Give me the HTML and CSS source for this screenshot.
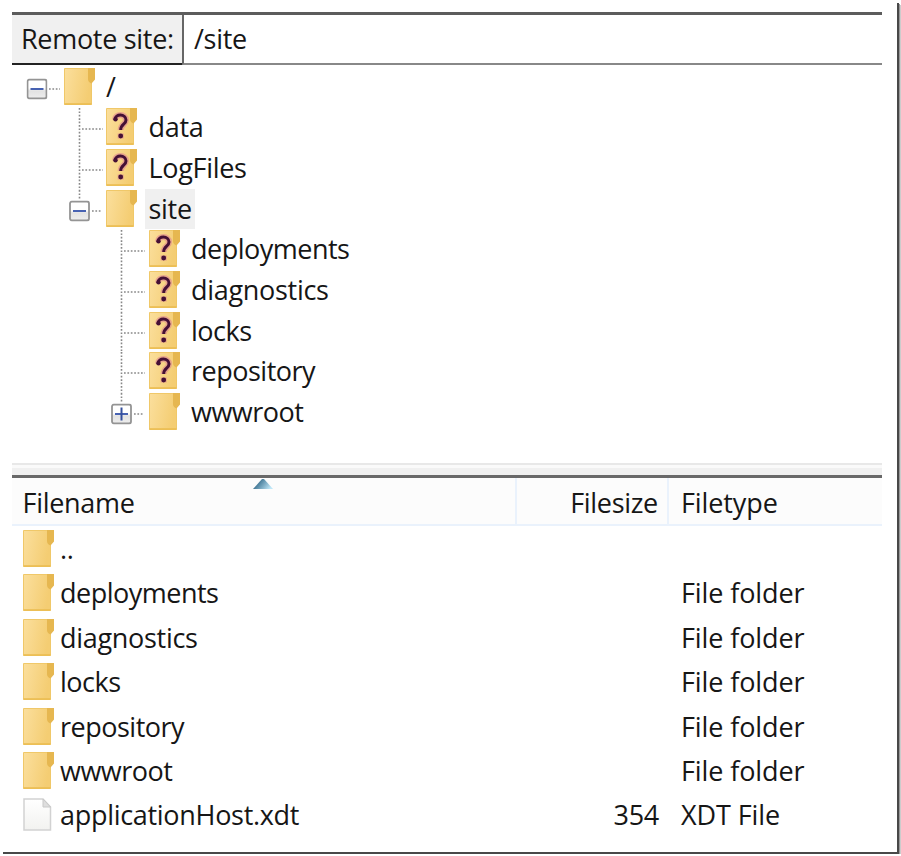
FILE: index.html
```html
<!DOCTYPE html>
<html lang="en">
<head>
<meta charset="utf-8">
<title>Remote site</title>
<link rel="stylesheet" href="styles.css">
</head>
<body>
<svg class="defs" aria-hidden="true">
  <defs>
    <linearGradient id="gold" x1="0" x2="1" y1="0" y2="0.25"><stop offset="0" stop-color="#fbdf9d"/><stop offset="1" stop-color="#f4cd73"/></linearGradient>
    <linearGradient id="btn" x1="0" x2="0" y1="0" y2="1"><stop offset="0.45" stop-color="#fff"/><stop offset="0.6" stop-color="#e2e2e2"/><stop offset="1" stop-color="#eee"/></linearGradient>
    <linearGradient id="arrow" x1="0" x2="1" y1="0.2" y2="0.6"><stop offset="0.2" stop-color="#376d8c"/><stop offset="1" stop-color="#bfe7f8"/></linearGradient>
    <linearGradient id="paper" x1="0" x2="0" y1="0" y2="1"><stop offset="0" stop-color="#fff"/><stop offset="1" stop-color="#f2f2f0"/></linearGradient>
    <symbol id="folder" viewBox="0 0 31 37" preserveAspectRatio="none">
      <path d="M.5.5H27.500V36.500H.5Z" fill="url(#gold)" stroke="#f0c869"/>
      <path d="M.5 36H27.500" stroke="#ebbd52" stroke-width="1.600"/>
      <path d="M24 0H31V11.500L27.500 15.500Q24 14 24 11Z" fill="#e6b750"/>
    </symbol>
    <symbol id="unknown" viewBox="0 0 31 37">
      <use href="#folder" width="31" height="37"/>
      <g fill="none" stroke="#e08a90" stroke-width="6" opacity=".65"><path d="M9 11.500C9 5.500 20 5.500 20 12C20 16.500 14.700 16 14.700 22"/><path d="M14.700 25.500v5"/></g>
      <path d="M9 11.500C9 5.500 20 5.500 20 12C20 16.500 14.700 16 14.700 22" fill="none" stroke="#451035" stroke-width="3"/>
      <circle cx="9.500" cy="11.300" r="2.200" fill="#451035"/>
      <circle cx="14.700" cy="28" r="2.400" fill="#451035"/>
    </symbol>
    <symbol id="minus" viewBox="0 0 21 21">
      <rect x="1" y="1" width="19" height="19" rx="2" fill="url(#btn)" stroke="#949494" stroke-width="1.800"/>
      <path d="M4 10.500H17" stroke="#4762b2" stroke-width="2"/>
    </symbol>
    <symbol id="plus" viewBox="0 0 21 21">
      <use href="#minus" width="21" height="21"/>
      <path d="M10.500 4V17" stroke="#344f9c" stroke-width="2"/>
    </symbol>
  </defs>
</svg>
<main class="window">
  <header class="address">
    <div class="caption"><span>Remote site:</span></div>
    <div class="path"><span>/site</span></div>
  </header>
  <section class="tree">
    <div class="node"><svg class="gutter root"><use href="#minus" x="14.500" y="10.500" width="21" height="21"/><path class="dots" d="M37 21H48"/></svg><svg class="icon"><use href="#folder"/></svg><span class="label">/</span></div>
    <div class="node"><svg class="gutter one"><path class="dots" d="M67.500 0V41M70 21H91"/></svg><svg class="icon"><use href="#unknown"/></svg><span class="label">data</span></div>
    <div class="node"><svg class="gutter one"><path class="dots" d="M67.500 0V41M70 21H91"/></svg><svg class="icon"><use href="#unknown"/></svg><span class="label">LogFiles</span></div>
    <div class="node"><svg class="gutter one"><path class="dots" d="M67.500 0V10M80 21H89"/><use href="#minus" x="57" y="10.500" width="21" height="21"/></svg><svg class="icon"><use href="#folder"/></svg><span class="label selected">site</span></div>
    <div class="node"><svg class="gutter two"><path class="dots" d="M109.500 0V41M112 21H133"/></svg><svg class="icon"><use href="#unknown"/></svg><span class="label tight">deployments</span></div>
    <div class="node"><svg class="gutter two"><path class="dots" d="M109.500 0V41M112 21H133"/></svg><svg class="icon"><use href="#unknown"/></svg><span class="label">diagnostics</span></div>
    <div class="node"><svg class="gutter two"><path class="dots" d="M109.500 0V41M112 21H133"/></svg><svg class="icon"><use href="#unknown"/></svg><span class="label tight">locks</span></div>
    <div class="node"><svg class="gutter two"><path class="dots" d="M109.500 0V41M112 21H133"/></svg><svg class="icon"><use href="#unknown"/></svg><span class="label tight">repository</span></div>
    <div class="node"><svg class="gutter two"><path class="dots" d="M109.500 0V10M122 21H132"/><use href="#plus" x="99" y="10.500" width="21" height="21"/></svg><svg class="icon"><use href="#folder"/></svg><span class="label tight">wwwroot</span></div>
  </section>
  <div class="splitter"></div>
  <section class="files">
    <div class="row head"><div class="name">Filename<svg class="sort" viewBox="0 0 20 10"><path d="M0 10L9 0H11L20 10Z" fill="url(#arrow)"/></svg></div><div class="size">Filesize</div><div class="type">Filetype</div></div>
    <div class="row"><div class="name"><svg class="icon"><use href="#folder"/></svg><span>..</span></div><div class="size"></div><div class="type"></div></div>
    <div class="row"><div class="name"><svg class="icon"><use href="#folder"/></svg><span class="tight">deployments</span></div><div class="size"></div><div class="type">File folder</div></div>
    <div class="row"><div class="name"><svg class="icon"><use href="#folder"/></svg><span>diagnostics</span></div><div class="size"></div><div class="type">File folder</div></div>
    <div class="row"><div class="name"><svg class="icon"><use href="#folder"/></svg><span class="tight">locks</span></div><div class="size"></div><div class="type">File folder</div></div>
    <div class="row"><div class="name"><svg class="icon"><use href="#folder"/></svg><span class="tight">repository</span></div><div class="size"></div><div class="type">File folder</div></div>
    <div class="row"><div class="name"><svg class="icon"><use href="#folder"/></svg><span class="tight">wwwroot</span></div><div class="size"></div><div class="type">File folder</div></div>
    <div class="row"><div class="name"><svg class="icon" viewBox="0 0 31 37"><path d="M1 3H20L27.500 11V34H1Z" fill="url(#paper)" stroke="#d2d2d2" stroke-width="1.500"/><path d="M20 3V11H27.500Z" fill="#dedede" stroke="#c8c8c8"/></svg><span>applicationHost.xdt</span></div><div class="size">354</div><div class="type">XDT File</div></div>
  </section>
</main>
</body>
</html>
```
FILE: styles.css
```css
* { box-sizing: border-box; }
body {
  margin: 0;
  background: #fff;
  color: #161616;
  font: 27px/36px "Open Sans", "Noto Sans", sans-serif;
  letter-spacing: -0.3px;
  overflow: hidden;
}
.defs { position: absolute; width: 0; height: 0; }
.window {
  width: 896px;
  height: 851px;
  margin: 3px 0 0 3px;
  padding: 9px 15px 0 9px;
  border-right: 2px solid #484848;
  border-bottom: 2px solid #484848;
  box-shadow: 1px 1px 0 #999, 2px 2px 0 #ccc;
}
.address {
  display: flex;
  height: 53px;
  border-top: 3px solid #5c5c5c;
}
.caption {
  width: 170px;
  padding: 6px 0 0 9px;
  background: #f0f0f0;
  border-bottom: 2px solid #222;
  white-space: nowrap;
}
.path {
  flex: 1;
  padding: 6px 0 0 10px;
  border-left: 2px solid #666;
  border-bottom: 2px solid #888;
}
.tree { height: 398px; padding-top: 2.5px; }
.node { display: flex; height: 40.7px; }
.gutter { flex: none; height: 41px; }
.root { width: 51.5px; }
.one { width: 94px; }
.two { width: 136.5px; }
.dots { fill: none; stroke: #888; stroke-width: 1.6; stroke-dasharray: 1.7 1.7; }
.icon { flex: none; width: 31px; height: 37px; }
.label {
  height: 40px;
  margin: -1px 0 0 8px;
  padding: 0 3px 0 3.5px;
  line-height: 40px;
  white-space: nowrap;
}
.tight { letter-spacing: -0.5px; }
.selected { background: #f0f0f0; }
.splitter {
  height: 15px;
  border-top: 2px solid #e8e8e8;
  border-bottom: 3px solid #686868;
  background: linear-gradient(#fafafa 30%, #f0f0f0 30%);
}
.row {
  display: grid;
  grid-template-columns: 503px 154px 1fr;
  height: 44.4px;
  line-height: 46px;
}
.row > div { white-space: nowrap; }
.name { display: flex; padding-left: 10.5px; }
.name .icon { margin: 4px 6.5px 0 0; }
.size { padding-right: 10px; text-align: right; }
.type { padding-left: 12px; letter-spacing: -0.1px; }
.head {
  height: 48px;
  line-height: 50px;
  grid-template-rows: 46px;
  background: #fcfcfc;
  border-bottom: 2px solid #eaf2fc;
}
.head .name { position: relative; }
.head .size { border-left: 2px solid #eaf2fc; border-right: 2px solid #eaf2fc; padding-right: 9px; }
.sort { position: absolute; left: 241px; top: 1px; width: 20px; height: 10px; }
```
